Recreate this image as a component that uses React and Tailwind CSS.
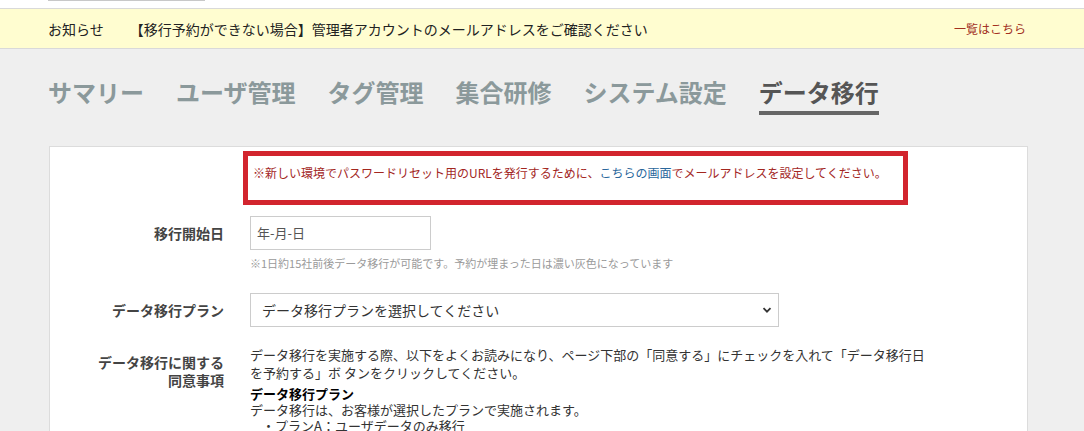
import { useState } from "react";

function App() {
  const [plan, setPlan] = useState("");
  const tabs = ["サマリー", "ユーザ管理", "タグ管理", "集合研修", "システム設定", "データ移行"];
  const active = "データ移行";

  return (
    <div className="min-h-screen bg-[#efefef] font-['Noto_Sans_CJK_JP','Noto_Sans',sans-serif] text-[#333]">
      {/* top strip */}
      <div className="h-2 bg-white">
        <div className="ml-12 h-px w-[157px] bg-[#c8c8c8]" />
      </div>

      {/* notice bar */}
      <div className="flex h-[41px] items-center border-y border-[#d9d9d9] bg-[#fffdd0] pl-12 text-sm text-[#222]">
        <span>お知らせ</span>
        <span className="ml-[26px]">【移行予約ができない場合】管理者アカウントのメールアドレスをご確認ください</span>
        <a href="#" className="ml-auto mr-[58px] text-xs text-[#a2301f]">
          一覧はこちら
        </a>
      </div>

      {/* tabs */}
      <nav className="flex gap-8 pl-12 pt-[27px]">
        {tabs.map((t) => (
          <div
            key={t}
            className={
              t === active
                ? "border-b-4 border-[#666] pb-[3px] text-2xl font-bold leading-[32px] text-[#555]"
                : "pb-[7px] text-2xl font-bold leading-[32px] text-[#8b999b]"
            }
          >
            {t}
          </div>
        ))}
      </nav>

      {/* card */}
      <div className="ml-[49px] mt-[31px] w-[979px] border border-[#dcdcdc] bg-white pb-4 pt-1">
        <div className="ml-[193px] h-[54px] w-[665px] border-[5px] border-[#d2252e] pl-[5px] pt-2 text-xs leading-[18px] text-[#a3271f]">
          ※新しい環境でパスワードリセット用のURLを発行するために、
          <a href="#" className="text-[#2a679c]">
            こちらの画面
          </a>
          でメールアドレスを設定してください。
        </div>

        {/* start date */}
        <div className="mt-[11px] flex gap-[26px]">
          <div className="flex w-[174px] items-center justify-end self-start h-[34px] text-sm font-bold text-[#444]">
            移行開始日
          </div>
          <div>
            <div className="flex h-[34px] w-[181px] items-center border border-[#ccc] pl-[6px] text-[13px] text-[#555]">
              年-月-日
            </div>
            <div className="mt-[5px] text-[11px] leading-4 text-[#9a9a9a]">
              ※1日約15社前後データ移行が可能です。予約が埋まった日は濃い灰色になっています
            </div>
          </div>
        </div>

        {/* plan */}
        <div className="mt-[22px] flex gap-[26px]">
          <div className="flex h-[34px] w-[174px] items-center justify-end text-sm font-bold text-[#444]">
            データ移行プラン
          </div>
          <div
            className="flex h-[34px] w-[529px] items-center justify-between border border-[#ccc] pl-[11px] pr-[5px] text-sm text-[#333]"
            onClick={() => setPlan(plan)}
          >
            <span>データ移行プランを選択してください</span>
            <svg width="12" height="12" viewBox="0 0 12 12" className="text-[#333]">
              <path d="M2.5 4.2 L6 7.7 L9.5 4.2" fill="none" stroke="currentColor" strokeWidth="1.8" />
            </svg>
          </div>
        </div>

        {/* agreement */}
        <div className="mt-[19px] flex gap-[26px]">
          <div className="w-[174px] pt-[7px] text-right text-sm font-bold leading-[18px] text-[#444]">
            データ移行に関する
            <br />
            同意事項
          </div>
          <div className="text-[13px] text-[#333]">
            <p className="leading-[18px]">
              データ移行を実施する際、以下をよくお読みになり、ページ下部の「同意する」にチェックを入れて「データ移行日
              <br />
              を予約する」ボ タンをクリックしてください。
            </p>
            <div className="mt-1 leading-4">
              <div className="font-bold text-black">データ移行プラン</div>
              <div>データ移行は、お客様が選択したプランで実施されます。</div>
              <div className="pl-3">・プランA：ユーザデータのみ移行</div>
            </div>
          </div>
        </div>
      </div>
    </div>
  );
}

export default App;
